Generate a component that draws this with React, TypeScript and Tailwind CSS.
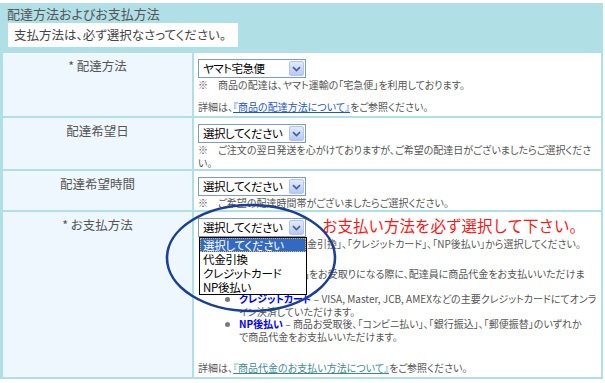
import React from 'react';

function Select({ value }: { value: string }) {
  return (
    <div className="flex h-[19px] w-[108px] items-center border border-[#7f9db9] bg-white">
      <span className="flex-1 whitespace-nowrap pl-[4px] text-[11.5px] leading-none tracking-[-0.5px] text-black">{value}</span>
      <span className="mr-[1px] flex h-[15px] w-[15px] shrink-0 items-center justify-center rounded-[2px] border border-[#b3c6f2] bg-linear-to-b from-[#e2eafe] to-[#b5c9f7]">
        <svg width="9" height="6" viewBox="0 0 9 6">
          <path d="M1 1.2l3.5 3.3 3.5-3.3" stroke="#4d6185" strokeWidth="1.7" fill="none" />
        </svg>
      </span>
    </div>
  );
}

function Label({ children }: { children: React.ReactNode }) {
  return (
    <div className="bg-[#eef7fe] pt-[6px] text-center text-[12.5px] leading-[14px] text-[#555]">
      {children}
    </div>
  );
}

function Bullet({ label, lines }: { label: string; lines: string[] }) {
  return (
    <li className="flex">
      <span className="flex h-[12.5px] w-[14px] shrink-0 items-center">
        <span className="h-[5px] w-[5px] rounded-full bg-[#7a7a7a]" />
      </span>
      <span className="whitespace-nowrap">
        <b className="text-[#0000ff]">{label}</b> – {lines[0]}
        <br />
        {lines[1]}
      </span>
    </li>
  );
}

export default function App() {
  return (
    <div className="relative h-[383px] w-[605px] bg-white pt-[3px] font-['Noto_Sans_CJK_JP',sans-serif] text-[#555] [font-feature-settings:'palt']">
      <div className="w-[603px] bg-[#b0dfe5] pb-[2px] pl-[3px] pr-[2px]">
        {/* Header */}
        <div className="h-[50px] pl-[4px] pt-[4px]">
          <div className="text-[13px] leading-[14px] text-[#555]">配達方法およびお支払方法</div>
          <div className="ml-[1px] mt-[2px] flex h-[24px] w-[230px] items-center bg-white pl-[6px] text-[12.5px] text-[#444]">
            支払方法は、必ず選択なさってください。
          </div>
        </div>

        {/* Table */}
        <div className="grid grid-cols-[189px_407px] gap-[2px]">
          <Label>* 配達方法</Label>
          <div className="bg-white pb-[3px] pl-[4px] pt-[6px] text-[10px] leading-[13px]">
            <Select value="ヤマト宅急便" />
            <p>※　商品の配達は、ヤマト運輸の「宅急便」を利用しております。</p>
            <p className="mt-[9px]">
              詳細は、<a className="text-[#1f56c9] underline">『商品の配達方法について』</a>をご参照ください。
            </p>
          </div>

          <Label>配達希望日</Label>
          <div className="bg-white pl-[4px] pt-[6px] text-[10px] leading-[13px]">
            <Select value="選択してください" />
            <p className="whitespace-nowrap">
              ※　ご注文の翌日発送を心がけておりますが、ご希望の配達日がございましたらご選択くださ
              <br />
              い。
            </p>
          </div>

          <Label>配達希望時間</Label>
          <div className="bg-white pb-[1px] pl-[4px] pt-[6px] text-[10px] leading-[13px]">
            <Select value="選択してください" />
            <p>※　ご希望の配達時間帯がございましたらご選択ください。</p>
          </div>

          <Label>* お支払方法</Label>
          <div className="bg-white pb-[3px] pl-[4px] pt-[6px] text-[10px] leading-[13px]">
            <Select value="選択してください" />
            <p className="whitespace-nowrap">※　お支払い方法は、「代金引換」、「クレジットカード」、「NP後払い」から選択してください。</p>
            <ul className="ml-[27px] mt-[18px] leading-[12.5px]">
              <Bullet label="代金引換" lines={['商品をお受取りになる際に、配達員に商品代金をお支払いいただけま', 'す。']} />
              <Bullet
                label="クレジットカード"
                lines={['VISA, Master, JCB, AMEXなどの主要クレジットカードにてオンラ', 'イン決済していただけます。']}
              />
              <Bullet
                label="NP後払い"
                lines={['商品お受取後、「コンビニ払い」、「銀行振込」、「郵便振替」のいずれか', 'で商品代金をお支払いいただけます。']}
              />
            </ul>
            <p className="mt-[18px]">
              詳細は、<a className="text-[#3f8a91] underline">『商品代金のお支払い方法について』</a>をご参照ください。
            </p>
          </div>
        </div>
      </div>

      {/* Annotation: red note */}
      <div className="absolute left-[322px] top-[216px] whitespace-nowrap text-[15.5px] leading-[18px] text-[#ff1515] [font-feature-settings:normal]">
        お支払い方法を必ず選択して下さい。
      </div>

      {/* Open dropdown list */}
      <div className="absolute left-[199px] top-[237px] w-[108px] border border-black bg-white text-[11.5px] leading-[14px] tracking-[-0.3px] text-black">
        <div className="h-[14px] border border-dotted border-[#f0b040] bg-[#316ac5] pl-[2px] leading-[12px] text-white">選択してください</div>
        <div className="h-[14px] pl-[3px]">代金引換</div>
        <div className="h-[14px] pl-[3px]">クレジットカード</div>
        <div className="h-[14px] pl-[3px]">NP後払い</div>
      </div>

      {/* Annotation: ellipse */}
      <svg className="absolute left-[164px] top-[202px]" width="174" height="112" viewBox="0 0 174 112">
        <ellipse cx="87" cy="56" rx="84" ry="53" fill="none" stroke="#1b3f95" strokeWidth="2.6" />
      </svg>
    </div>
  );
}
